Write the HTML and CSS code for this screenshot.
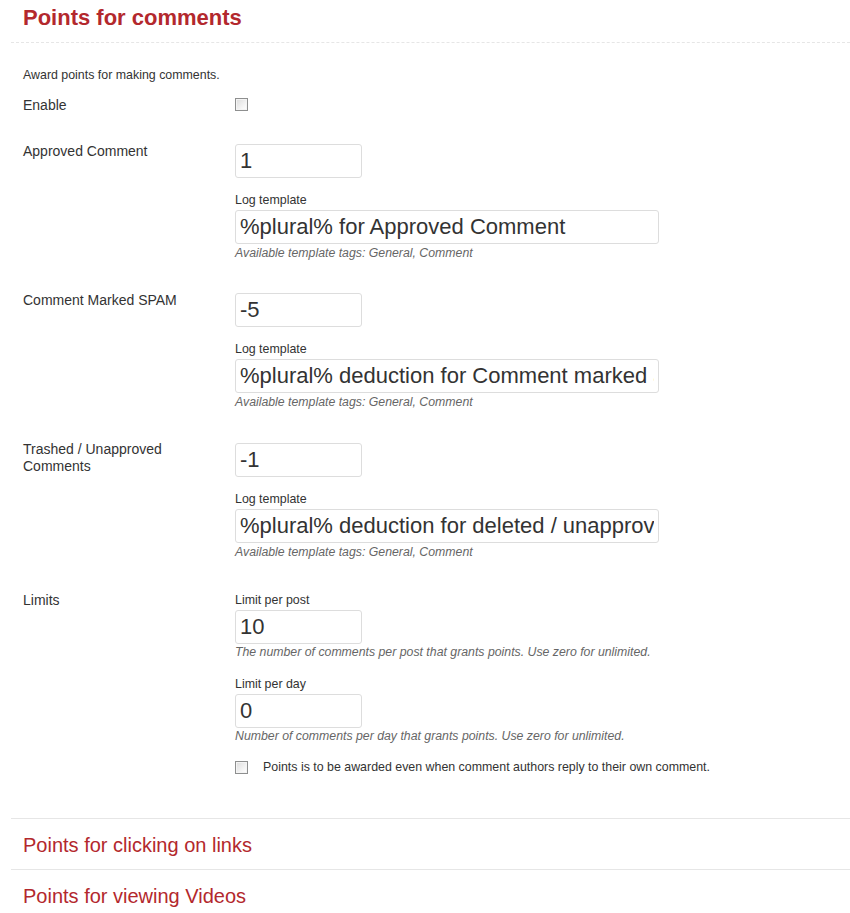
FILE: index.html
```html
<!DOCTYPE html>
<html>
<head>
<meta charset="utf-8">
<link rel="stylesheet" href="styles.css">
</head>
<body>
<div class="accordion">
  <div class="section">
    <h3 class="sec-title open">Points for comments</h3>
    <div class="sec-body">
      <p class="desc">Award points for making comments.</p>
      <div class="row row-enable">
        <div class="label">Enable</div>
        <div class="field"><input type="checkbox" class="cb"></div>
      </div>
      <div class="row">
        <div class="label">Approved Comment</div>
        <div class="field">
          <input type="text" class="inp small" value="1">
          <div class="sublabel">Log template</div>
          <input type="text" class="inp wide" value="%plural% for Approved Comment">
          <div class="help">Available template tags: General, Comment</div>
        </div>
      </div>
      <div class="row">
        <div class="label">Comment Marked SPAM</div>
        <div class="field">
          <input type="text" class="inp small" value="-5">
          <div class="sublabel">Log template</div>
          <input type="text" class="inp wide" value="%plural% deduction for Comment marked as SPAM">
          <div class="help">Available template tags: General, Comment</div>
        </div>
      </div>
      <div class="row row-wide-gap">
        <div class="label two">Trashed / Unapproved Comments</div>
        <div class="field">
          <input type="text" class="inp small" value="-1">
          <div class="sublabel">Log template</div>
          <input type="text" class="inp wide" value="%plural% deduction for deleted / unapproved Comment">
          <div class="help">Available template tags: General, Comment</div>
        </div>
      </div>
      <div class="row row-limits">
        <div class="label">Limits</div>
        <div class="field">
          <div class="sublabel first">Limit per post</div>
          <input type="text" class="inp small" value="10">
          <div class="help">The number of comments per post that grants points. Use zero for unlimited.</div>
          <div class="sublabel second">Limit per day</div>
          <input type="text" class="inp small" value="0">
          <div class="help">Number of comments per day that grants points. Use zero for unlimited.</div>
          <label class="cb-line"><input type="checkbox" class="cb"><span>Points is to be awarded even when comment authors reply to their own comment.</span></label>
        </div>
      </div>
    </div>
  </div>
  <div class="section closed">
    <h3 class="sec-title">Points for clicking on links</h3>
  </div>
  <div class="section closed">
    <h3 class="sec-title">Points for viewing Videos</h3>
  </div>
</div>
</body>
</html>
```
FILE: styles.css
```css
html, body {
  margin: 0;
  padding: 0;
  background: #fff;
}
body {
  font-family: "Liberation Sans", Arial, sans-serif;
  color: #333;
  width: 850px;
  height: 913px;
  overflow: hidden;
}
.accordion {
  margin-left: 11px;
}
.sec-title {
  margin: 0;
  font-size: 20px;
  line-height: 24px;
  font-weight: normal;
  color: #b3282d;
  padding: 14px 12px 12px;
}
.sec-title.open {
  font-size: 22px;
  font-weight: bold;
  padding-top: 6px;
  padding-bottom: 12px;
  border-bottom: 1px dashed #e6e6e6;
}
.section.closed {
  border-top: 1px solid #e6e6e6;
}
.sec-body {
  padding: 0 0 42px 12px;
}
.desc {
  margin: 24px 0 0;
  font-size: 12.4px;
  line-height: 16px;
}
.row {
  display: grid;
  grid-template-columns: 212px 1fr;
  margin-top: 33px;
}
.row-enable {
  margin-top: 13px;
}
.row-enable + .row {
  margin-top: 30px;
}
.row-wide-gap {
  margin-top: 34px;
}
.row-limits {
  margin-top: 34px;
}
.label {
  font-size: 14px;
  line-height: 14px;
  padding-right: 12px;
}
.label.two {
  line-height: 17px;
  margin-top: -2px;
}
.row-enable .label {
  line-height: 18px;
}
.field {
  display: flex;
  flex-direction: column;
  align-items: flex-start;
}
.cb {
  appearance: none;
  -webkit-appearance: none;
  width: 13px;
  height: 13px;
  margin: 2px 0 0;
  border: 1px solid #8e8f8f;
  background: linear-gradient(135deg, #dcdcdc 0%, #f6f6f6 70%, #ffffff 100%);
  box-shadow: inset 0 0 0 1px #f4f4f4;
  box-sizing: border-box;
  flex: none;
}
.inp {
  box-sizing: border-box;
  height: 34px;
  border: 1px solid #ddd;
  border-radius: 3px;
  padding: 0 4px;
  font-family: "Liberation Sans", Arial, sans-serif;
  font-size: 22px;
  color: #333;
  background: #fff;
  margin: 0;
  outline: none;
}
.inp.small {
  width: 127px;
}
.inp.wide {
  width: 424px;
}
.sublabel {
  font-size: 12.4px;
  line-height: 14px;
  margin: 15px 0 3px;
}
.sublabel.first {
  margin-top: 0;
  margin-bottom: 3px;
}
.sublabel.second {
  margin-top: 18px;
  margin-bottom: 3px;
}
.help {
  font-size: 12.3px;
  line-height: 14px;
  font-style: italic;
  color: #666;
  margin-top: 2px;
}
.row-limits .help {
  margin-top: 1px;
}
.cb-line {
  display: flex;
  align-items: flex-start;
  margin-top: 15px;
  font-size: 12.4px;
  line-height: 18px;
}
.cb-line .cb {
  margin-top: 3px;
  margin-right: 15px;
}
```
